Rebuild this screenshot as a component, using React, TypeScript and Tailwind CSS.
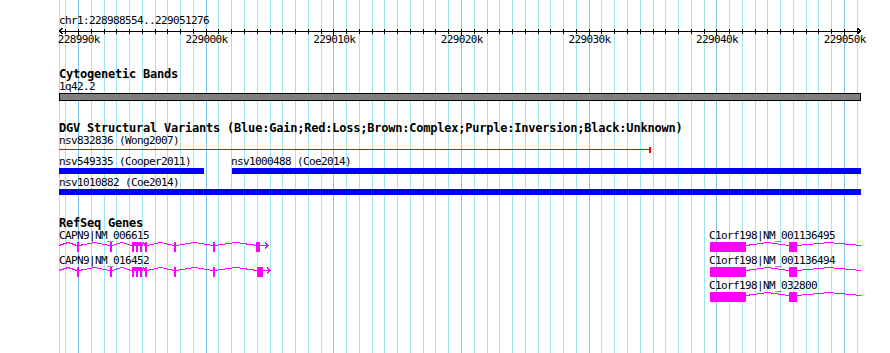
import React from "react";

const F = "font-['DejaVu_Sans_Mono','Liberation_Mono',monospace]";
const MINOR = "#a4e6ee";
const MAJOR = "#84c4ee";
const MAG = "#ff00ff";

type GL = { x: number; major: boolean };
function gridLines(): GL[] {
  const xs: GL[] = [{ x: 59, major: false }];
  for (let k = -1; k <= 61; k++) {
    const x = Math.floor(78.5 + 12.7667 * k);
    if (x <= 860) xs.push({ x, major: k % 10 === 0 });
  }
  return xs;
}

const GRID = gridLines();
const TICK_LABELS = [0, 10, 20, 30, 40, 50, 60].map((k) => `${228990 + k}k`);

type Gene = {
  exons: [number, number][];
  introns: [number, number][];
  arrow?: [number, number];
};

function hat(a: number, b: number) {
  const m = (a + b) / 2;
  return `${a},3.5 ${m},0.5 ${b},3.5`;
}

function GeneRow({ genes }: { genes: Gene[] }) {
  return (
    <svg width={890} height={12} className="block" shapeRendering="crispEdges">
      {genes.map((g, gi) => (
        <g key={gi}>
          {g.introns.map(([a, b], i) => (
            <polyline key={i} points={hat(a, b)} fill="none" stroke={MAG} strokeWidth={1} />
          ))}
          {g.arrow && (
            <g>
              <line x1={g.arrow[0]} y1={3.5} x2={g.arrow[1]} y2={3.5} stroke={MAG} strokeWidth={1} />
              <polyline
                points={`${g.arrow[1] - 3},0.5 ${g.arrow[1]},3.5 ${g.arrow[1] - 3},6.5`}
                fill="none"
                stroke={MAG}
                strokeWidth={1}
              />
            </g>
          )}
          {g.exons.map(([x, w], i) => (
            <rect key={i} x={x} y={0} width={w} height={10} fill={MAG} />
          ))}
        </g>
      ))}
    </svg>
  );
}

const capnExons: [number, number][] = [
  [77, 2],
  [110, 2],
  [132, 2],
  [136, 2],
  [140, 2],
  [145, 2],
  [174, 2],
  [213, 2],
];
const capnIntrons: [number, number][] = [
  [59, 77],
  [79, 110],
  [112, 132],
  [134, 136],
  [138, 140],
  [142, 145],
  [147, 174],
  [176, 213],
  [215, 257],
];

const capn1: Gene = { exons: [...capnExons, [256, 4]], introns: capnIntrons, arrow: [260, 268] };
const capn2: Gene = { exons: [...capnExons, [257, 6]], introns: capnIntrons, arrow: [263, 270] };
const c1orf: Gene = {
  exons: [
    [710, 36],
    [789, 8],
  ],
  introns: [
    [746, 789],
    [797, 861],
  ],
};

const label = "text-[11px] tracking-[-0.62px] leading-[13px] whitespace-pre";
const title = "text-[12px] tracking-[-0.22px] font-bold whitespace-pre";

export default function App() {
  return (
    <div className="relative w-[890px] h-[353px] bg-white overflow-hidden text-black">
      {/* background grid */}
      <svg className="absolute left-0 top-0" width={890} height={353} shapeRendering="crispEdges">
        {GRID.map((g, i) => (
          <rect key={i} x={g.x} y={0} width={1} height={353} fill={g.major ? MAJOR : MINOR} />
        ))}
      </svg>

      <div className={`relative flex flex-col ${F}`}>
        {/* Ruler */}
        <div className="flex flex-col">
          <div className={`pl-[59px] pt-[14px] h-[27px] ${label}`}>chr1:228988554..229051276</div>
          <svg width={890} height={6} className="block overflow-visible" shapeRendering="crispEdges">
            <rect x={59} y={4} width={802} height={1} fill="#000" />
            {GRID.slice(1).map((g, i) => (
              <rect key={i} x={g.x} y={2} width={1} height={g.major ? 7 : 5} fill="#000" />
            ))}
            <polyline points="62.5,1 59.5,4 62.5,7" fill="none" stroke="#000" strokeWidth={1} />
            <polyline points="857.5,1 860.5,4 857.5,7" fill="none" stroke="#000" strokeWidth={1} />
          </svg>
          <div className={`flex pl-[15px] h-[13px] ${label}`}>
            {TICK_LABELS.map((t) => (
              <div key={t} className="w-[127.67px] shrink-0 text-center">
                {t}
              </div>
            ))}
          </div>
        </div>

        {/* Cytogenetic Bands */}
        <section className="mt-[22px] flex flex-col">
          <div className={`pl-[59px] h-[12px] leading-[12px] ${title}`}>Cytogenetic Bands</div>
          <div className={`pl-[59px] h-[13px] ${label}`}>1q42.2</div>
          <div className="ml-[59px] w-[802px] h-[8px] bg-[#808080] border border-black" />
        </section>

        {/* DGV */}
        <section className="mt-[21px] flex flex-col">
          <div className={`pl-[59px] h-[12px] leading-[12px] ${title}`}>
            DGV Structural Variants (Blue:Gain;Red:Loss;Brown:Complex;Purple:Inversion;Black:Unknown)
          </div>
          <div className={`pl-[59px] h-[13px] ${label}`}>nsv832836 (Wong2007)</div>
          <div className="flex items-start pl-[59px] h-[8px]">
            <div className="mt-[2px] w-[590px] h-px bg-[#ff0000]" />
            <div className="w-[2px] h-[6px] bg-[#ff0000]" />
          </div>
          <div className={`flex pl-[59px] h-[13px] ${label}`}>
            <span className="w-[172px] shrink-0">nsv549335 (Cooper2011)</span>
            <span>nsv1000488 (Coe2014)</span>
          </div>
          <div className="flex items-start gap-[28px] pl-[59px] h-[8px]">
            <div className="w-[145px] h-[6px] bg-[#0000ff]" />
            <div className="w-[629px] h-[6px] bg-[#0000ff]" />
          </div>
          <div className={`pl-[59px] h-[13px] ${label}`}>nsv1010882 (Coe2014)</div>
          <div className="ml-[59px] w-[802px] h-[6px] bg-[#0000ff]" />
        </section>

        {/* RefSeq Genes */}
        <section className="mt-[23px] flex flex-col">
          <div className={`pl-[59px] h-[11px] leading-[11px] ${title}`}>RefSeq Genes</div>
          <div className={`flex pl-[59px] h-[13px] ${label}`}>
            <span className="w-[650px] shrink-0">CAPN9|NM_006615</span>
            <span>C1orf198|NM_001136495</span>
          </div>
          <GeneRow genes={[capn1, c1orf]} />
          <div className={`flex pl-[59px] h-[13px] ${label}`}>
            <span className="w-[650px] shrink-0">CAPN9|NM_016452</span>
            <span>C1orf198|NM_001136494</span>
          </div>
          <GeneRow genes={[capn2, c1orf]} />
          <div className={`flex pl-[709px] h-[13px] ${label}`}>
            <span>C1orf198|NM_032800</span>
          </div>
          <GeneRow genes={[c1orf]} />
        </section>
      </div>
    </div>
  );
}
